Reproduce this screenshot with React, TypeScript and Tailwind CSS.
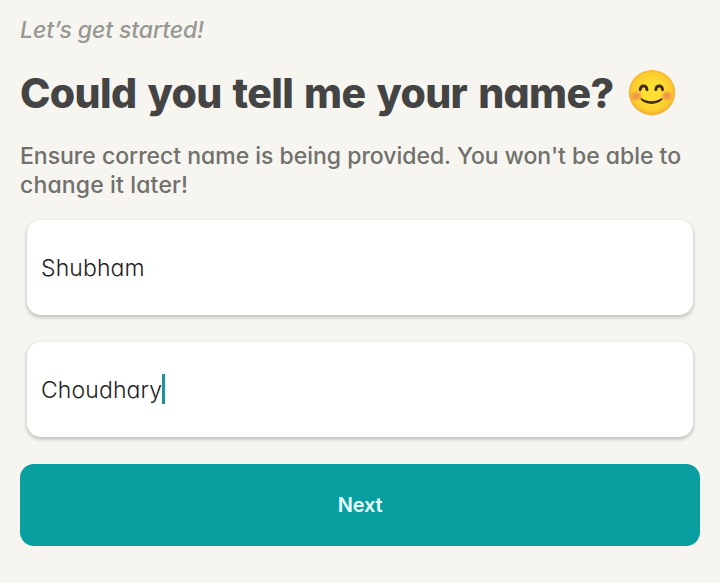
import { useState } from 'react';

function SmileEmoji() {
  return (
    <svg viewBox="0 0 48 48" className="h-[48px] w-[48px] shrink-0" aria-hidden="true">
      <defs>
        <radialGradient id="face" cx="50%" cy="48%" r="52%">
          <stop offset="0.45" stopColor="#fdde32" />
          <stop offset="0.8" stopColor="#fbcc2d" />
          <stop offset="1" stopColor="#f2aa33" />
        </radialGradient>
        <radialGradient id="blush">
          <stop offset="0" stopColor="#ee8250" stopOpacity="0.85" />
          <stop offset="0.4" stopColor="#ee8250" stopOpacity="0.7" />
          <stop offset="1" stopColor="#ee8250" stopOpacity="0" />
        </radialGradient>
      </defs>
      <ellipse cx="24" cy="23.6" rx="23.2" ry="22.6" fill="url(#face)" />
      <ellipse cx="8.4" cy="27" rx="6.4" ry="5.8" fill="url(#blush)" />
      <ellipse cx="38.8" cy="27" rx="6.4" ry="5.8" fill="url(#blush)" />
      <g fill="none" stroke="#422b0d" strokeLinecap="round" strokeWidth="2.9">
        <path d="M12.2 20.7 C12.8 15.6 18.4 15.6 19 20.7" />
        <path d="M27.8 20.7 C28.4 15.6 34 15.6 34.6 20.7" />
      </g>
      <path
        d="M12.7 30.6 C11.9 29.5 12.9 28.7 14.1 29.5 C19.9 33 27.1 33 32.9 29.5 C34.1 28.7 35.1 29.5 34.3 30.6 C29.3 36.4 17.7 36.4 12.7 30.6 Z"
        fill="#422b0d"
      />
    </svg>
  );
}

function NameField({ value, focused = false }: { value: string; focused?: boolean }) {
  return (
    <div className="mx-[7px] flex h-[95px] items-center rounded-[14px] bg-white pl-[14px] pr-4 shadow-[0_2px_4px_rgba(0,0,0,0.26)]">
      <span className="whitespace-nowrap text-[23px] font-light leading-[30px] tracking-[0.12px] text-[#222]">{value}</span>
      {focused && <span className="mb-[2px] h-[30px] w-[3px] bg-[#1a9698]" />}
    </div>
  );
}

export default function App() {
  const [firstName] = useState('Shubham');
  const [lastName] = useState('Choudhary');

  return (
    <main className="h-[583px] w-[720px] overflow-hidden bg-[#f6f5f0] px-5 pt-[15px] font-['Inter',sans-serif] [font-feature-settings:'cv11']">
      <p className="text-[23px] font-medium italic leading-[30px] tracking-[-0.1px] text-[#979794]">Let’s get started!</p>

      <div className="mt-[23px] flex h-[50px] items-center">
        <h1 className="w-[593px] whitespace-nowrap text-[41px] font-extrabold leading-[50px] tracking-[-0.65px] text-[#444] [word-spacing:2.7px]">
          Could you tell me your name?
        </h1>
        <span className="ml-[15px]">
          <SmileEmoji />
        </span>
      </div>

      <p className="mt-[24px] whitespace-nowrap text-[23px] font-medium leading-[29px] tracking-[-0.02px] text-[#70706d]">
        Ensure correct name is being provided. You won't be able to
        <br />
        <span className="tracking-[0.15px]">change it later!</span>
      </p>

      <div className="mt-[20px] flex flex-col gap-[27px]">
        <NameField value={firstName} />
        <NameField value={lastName} focused />
      </div>

      <button
        type="button"
        className="mt-[26.5px] flex h-[82.5px] w-full items-center justify-center rounded-[14px] bg-[#099fa0] text-[20px] font-semibold tracking-[-0.2px] text-[#e9ffff]"
      >
        Next
      </button>
    </main>
  );
}
